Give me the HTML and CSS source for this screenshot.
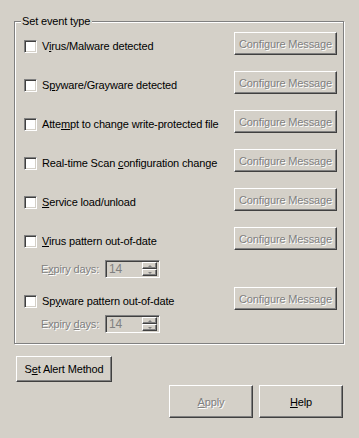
FILE: index.html
```html
<!DOCTYPE html>
<html>
<head>
<meta charset="utf-8">
<link rel="stylesheet" href="styles.css">
</head>
<body>
<div class="page">
  <div class="group">
    <div class="group-title">Set event type</div>
    <div class="rows">
      <div class="row">
        <label class="check"><span class="box"></span><span>V<u>i</u>rus/Malware detected</span></label>
        <button class="btn cfg" disabled>Configure Message</button>
      </div>
      <div class="row">
        <label class="check"><span class="box"></span><span>S<u>p</u>yware/Grayware detected</span></label>
        <button class="btn cfg" disabled>Configure Message</button>
      </div>
      <div class="row">
        <label class="check"><span class="box"></span><span>Atte<u>m</u>pt to change write-protected file</span></label>
        <button class="btn cfg" disabled>Configure Message</button>
      </div>
      <div class="row">
        <label class="check"><span class="box"></span><span>Real-time Scan <u>c</u>onfiguration change</span></label>
        <button class="btn cfg" disabled>Configure Message</button>
      </div>
      <div class="row">
        <label class="check"><span class="box"></span><span><u>S</u>ervice load/unload</span></label>
        <button class="btn cfg" disabled>Configure Message</button>
      </div>
      <div class="item">
        <div class="row">
          <label class="check"><span class="box"></span><span><u>V</u>irus pattern out-of-date</span></label>
          <button class="btn cfg" disabled>Configure Message</button>
        </div>
        <div class="expiry first">
          <span class="dis">E<u>x</u>piry days:</span>
          <div class="spin"><span class="val">14</span><span class="arrows"><span class="ab up"></span><span class="ab down"></span></span></div>
        </div>
      </div>
      <div class="item second">
        <div class="row">
          <label class="check"><span class="box"></span><span>Sp<u>y</u>ware pattern out-of-date</span></label>
          <button class="btn cfg" disabled>Configure Message</button>
        </div>
        <div class="expiry">
          <span class="dis">Expiry <u>d</u>ays:</span>
          <div class="spin"><span class="val">14</span><span class="arrows"><span class="ab up"></span><span class="ab down"></span></span></div>
        </div>
      </div>
    </div>
  </div>
  <div class="alert-row"><button class="btn alert">S<u>e</u>t Alert Method</button></div>
  <div class="actions">
    <button class="btn act" disabled><u>A</u>pply</button>
    <button class="btn act"><u>H</u>elp</button>
  </div>
</div>
</body>
</html>
```
FILE: styles.css
```css
html, body {
  margin: 0;
  padding: 0;
  background: #d4d0c8;
}
body {
  font-family: "Liberation Sans", Arial, sans-serif;
  font-size: 11px;
  letter-spacing: -0.15px;
  color: #000;
}
.page {
  padding: 21px 15px 0 14px;
  width: 330px;
}
.group {
  border: 1px solid #808080;
  box-shadow: inset 1px 1px 0 #fff, 1px 1px 0 #fff;
  padding: 0 6px 10px 9px;
}
.group-title {
  display: table;
  margin: -7px 0 0 -3px;
  padding: 0 2px 0 1px;
  background: #d4d0c8;
  line-height: 13px;
  height: 13px;
}
.rows {
  margin-top: 4px;
  display: flex;
  flex-direction: column;
  gap: 16px;
}
.item.second { margin-top: -7px; }
.row {
  display: flex;
  justify-content: space-between;
  align-items: flex-start;
  height: 23px;
}
.check {
  display: flex;
  align-items: center;
  gap: 5px;
  margin-top: 8px;
  line-height: 13px;
  white-space: nowrap;
}
.box {
  width: 9px;
  height: 9px;
  background: #fff;
  border: 1px solid;
  border-color: #808080 #fff #fff #808080;
  box-shadow: inset 1px 1px 0 #404040, inset -1px -1px 0 #d4d0c8;
  padding: 1px;
  flex: none;
}
.btn {
  font: inherit;
  letter-spacing: inherit;
  color: #000;
  background: #d4d0c8;
  border: 1px solid;
  border-color: #fff #404040 #404040 #fff;
  box-shadow: inset -1px -1px 0 #808080;
  padding: 0;
  margin: 0;
  box-sizing: border-box;
}
.btn:disabled {
  color: #808080;
  text-shadow: 1px 1px 0 #fff;
}
.cfg {
  width: 103px;
  height: 23px;
  flex: none;
}
.expiry {
  display: flex;
  align-items: center;
  margin-top: 5px;
  padding-left: 17px;
  height: 18px;
}
.expiry.first { margin-top: 10px; }
.dis {
  color: #808080;
  text-shadow: 1px 1px 0 #fff;
  width: 64px;
}
.spin {
  width: 55px;
  height: 18px;
  box-sizing: border-box;
  border: 1px solid;
  border-color: #808080 #fff #fff #808080;
  box-shadow: inset 1px 1px 0 #404040, inset -1px -1px 0 #d4d0c8;
  display: flex;
  align-items: center;
  justify-content: space-between;
  padding: 2px 2px 2px 3px;
}
.val {
  color: #808080;
  font-size: 12px;
}
.arrows {
  display: flex;
  flex-direction: column;
  width: 15px;
  height: 14px;
}
.ab {
  flex: 1;
  border: 1px solid;
  border-color: #fff #404040 #404040 #fff;
  box-shadow: inset -1px -1px 0 #808080;
  position: relative;
}
.ab::after {
  content: "";
  position: absolute;
  left: 50%;
  top: 50%;
  margin-left: -2px;
  border-left: 2px solid transparent;
  border-right: 2px solid transparent;
}
.ab.up::after {
  margin-top: -1px;
  border-bottom: 2px solid #808080;
}
.ab.down::after {
  margin-top: -1px;
  border-top: 2px solid #808080;
}
.alert-row {
  margin-top: 12px;
  padding-left: 2px;
}
.alert {
  width: 96px;
  height: 26px;
}
.actions {
  margin-top: 3px;
  display: flex;
  justify-content: flex-end;
  gap: 6px;
  padding-right: 1px;
}
.act {
  width: 84px;
  height: 33px;
}
```
